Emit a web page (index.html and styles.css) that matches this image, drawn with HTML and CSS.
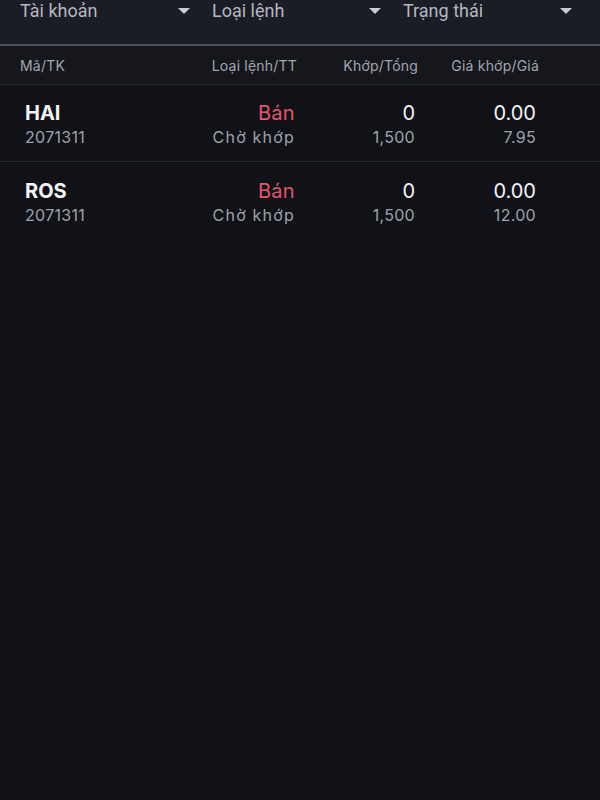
FILE: index.html
```html
<!DOCTYPE html>
<html>
<head>
  <meta charset="utf-8">
  <link rel="stylesheet" href="styles.css">
</head>
<body>
  <div class="filters">
    <div class="filter">
      <span>Tài khoản</span>
      <span class="caret"></span>
    </div>
    <div class="filter">
      <span>Loại lệnh</span>
      <span class="caret"></span>
    </div>
    <div class="filter">
      <span>Trạng thái</span>
      <span class="caret"></span>
    </div>
  </div>

  <div class="table-head">
    <div class="col-left">Mã/TK</div>
    <div class="col-right">Loại lệnh/TT</div>
    <div class="col-right">Khớp/Tổng</div>
    <div class="col-right">Giá khớp/Giá</div>
  </div>

  <div class="order">
    <div class="col-left">
      <div class="main symbol">HAI</div>
      <div class="sub">2071311</div>
    </div>
    <div class="col-right">
      <div class="main sell">Bán</div>
      <div class="sub wide">Chờ khớp</div>
    </div>
    <div class="col-right">
      <div class="main">0</div>
      <div class="sub">1,500</div>
    </div>
    <div class="col-right">
      <div class="main">0.00</div>
      <div class="sub">7.95</div>
    </div>
  </div>

  <div class="order">
    <div class="col-left">
      <div class="main symbol">ROS</div>
      <div class="sub">2071311</div>
    </div>
    <div class="col-right">
      <div class="main sell">Bán</div>
      <div class="sub wide">Chờ khớp</div>
    </div>
    <div class="col-right">
      <div class="main">0</div>
      <div class="sub">1,500</div>
    </div>
    <div class="col-right">
      <div class="main">0.00</div>
      <div class="sub">12.00</div>
    </div>
  </div>
</body>
</html>
```

FILE: styles.css
```css
html, body {
  height: 100%;
}

body {
  margin: 0;
  background: #101217;
  color: #ffffff;
  font-family: 'Inter', 'Noto Sans', sans-serif;
}

.filters {
  display: grid;
  grid-template-columns: 192px 191px 191px;
  height: 46px;
  padding-left: 20px;
  background: #1a1d24;
  border-bottom: 2px solid #4b4f58;
  box-sizing: border-box;
}

.filter {
  display: flex;
  justify-content: space-between;
  align-items: flex-start;
  padding-right: 22px;
  font-family: 'Roboto', sans-serif;
  font-size: 18px;
  line-height: 22px;
  color: #b4b8c0;
}

.caret {
  width: 0;
  height: 0;
  margin-top: 8px;
  border-left: 6px solid transparent;
  border-right: 6px solid transparent;
  border-top: 6px solid #c8ccd3;
}

.table-head {
  display: grid;
  grid-template-columns: 1fr 121px 121px 121px;
  align-items: center;
  height: 38px;
  padding: 0 61px 0 20px;
  background: #15171d;
  border-bottom: 1px solid #23252c;
  font-size: 14px;
  letter-spacing: 0.2px;
  color: #a2a6ae;
}

.order {
  display: grid;
  grid-template-columns: 1fr 120px 120px 121px;
  align-items: center;
  height: 77px;
  padding: 3px 64px 0 25px;
  box-sizing: border-box;
  border-bottom: 1px solid #26282f;
}

.order:last-child {
  border-bottom: none;
}

.col-left {
  text-align: left;
}

.col-right {
  text-align: right;
}

.main {
  font-size: 20px;
  line-height: 25px;
  color: #f4f5f7;
}

.symbol {
  font-weight: 700;
}

.sell {
  color: #e3566b;
  letter-spacing: 0.3px;
}

.sub {
  font-size: 16px;
  line-height: 22px;
  letter-spacing: 0.3px;
  color: #9ea2aa;
}

.sub.wide {
  letter-spacing: 1.2px;
}
```
